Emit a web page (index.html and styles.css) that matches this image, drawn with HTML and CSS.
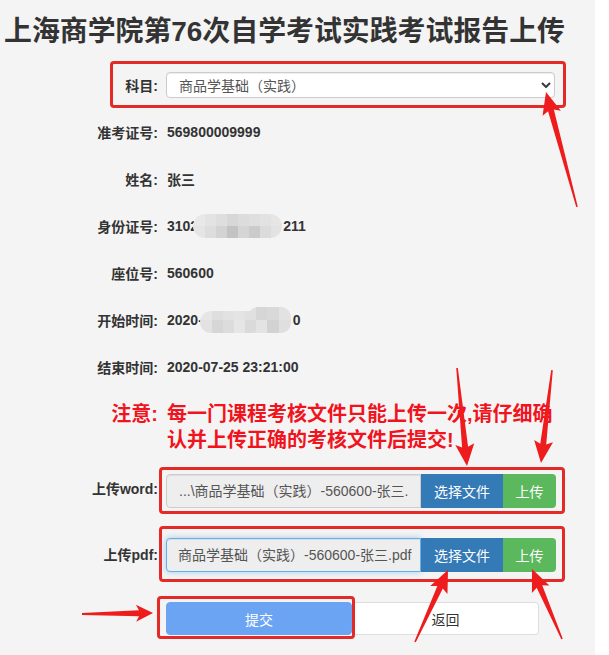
FILE: index.html
```html
<!DOCTYPE html>
<html lang="zh-CN">
<head>
<meta charset="utf-8">
<title>上海商学院第76次自学考试实践考试报告上传</title>
<link rel="stylesheet" href="styles.css">
</head>
<body>
<div class="page">
  <h1 class="title">上海商学院第76次自学考试实践考试报告上传</h1>

  <div class="mark subject">
    <span class="lbl">科目:</span>
    <div class="select">
      <span>商品学基础（实践）</span>
      <svg class="chev" width="10" height="6" viewBox="0 0 10 6"><path d="M1 1 L5 5 L9 1" fill="none" stroke="#3a3a3a" stroke-width="2"/></svg>
    </div>
  </div>

  <div class="info">
    <div class="row"><span class="lbl">准考证号:</span><span class="val">569800009999</span></div>
    <div class="row"><span class="lbl">姓名:</span><span class="val">张三</span></div>
    <div class="row"><span class="lbl">身份证号:</span><span class="val">3102<svg class="blur blur-id" width="89" height="24" viewBox="0 0 89 24"><defs><clipPath id="cb1"><rect width="89" height="24" rx="12"/></clipPath></defs><g clip-path="url(#cb1)"><rect x="0" y="0" width="12" height="12" fill="#e8e8e8"/><rect x="12" y="0" width="11" height="12" fill="#e3e3e3"/><rect x="23" y="0" width="11" height="12" fill="#dedede"/><rect x="34" y="0" width="11" height="12" fill="#d7d7d7"/><rect x="45" y="0" width="11" height="12" fill="#dcdcdc"/><rect x="56" y="0" width="11" height="12" fill="#dfdfdf"/><rect x="67" y="0" width="11" height="12" fill="#e2e2e2"/><rect x="78" y="0" width="11" height="12" fill="#e6e6e6"/><rect x="0" y="12" width="12" height="12" fill="#e5e5e5"/><rect x="12" y="12" width="11" height="12" fill="#dddddd"/><rect x="23" y="12" width="11" height="12" fill="#d3d3d3"/><rect x="34" y="12" width="11" height="12" fill="#c3c3c3"/><rect x="45" y="12" width="11" height="12" fill="#d5d5d5"/><rect x="56" y="12" width="11" height="12" fill="#cbcbcb"/><rect x="67" y="12" width="11" height="12" fill="#dbdbdb"/><rect x="78" y="12" width="11" height="12" fill="#e3e3e3"/></g></svg><span class="after-id">211</span></span></div>
    <div class="row"><span class="lbl">座位号:</span><span class="val">560600</span></div>
    <div class="row"><span class="lbl">开始时间:</span><span class="val">2020-<svg class="blur blur-time" width="91" height="26" viewBox="0 0 91 26"><defs><clipPath id="cb2"><rect x="0" y="4" width="62" height="22" rx="11"/><rect x="48" y="0" width="43" height="26" rx="10"/></clipPath></defs><g clip-path="url(#cb2)"><rect x="0" y="0" width="12" height="13" fill="#e6e6e6"/><rect x="12" y="0" width="11" height="13" fill="#dedede"/><rect x="23" y="0" width="11" height="13" fill="#e2e2e2"/><rect x="34" y="0" width="11" height="13" fill="#e4e4e4"/><rect x="45" y="0" width="11" height="13" fill="#e0e0e0"/><rect x="56" y="0" width="11" height="13" fill="#d6d6d6"/><rect x="67" y="0" width="12" height="13" fill="#d9d9d9"/><rect x="79" y="0" width="12" height="13" fill="#e2e2e2"/><rect x="0" y="13" width="12" height="13" fill="#e2e2e2"/><rect x="12" y="13" width="11" height="13" fill="#d6d6d6"/><rect x="23" y="13" width="11" height="13" fill="#dcdcdc"/><rect x="34" y="13" width="11" height="13" fill="#e6e6e6"/><rect x="45" y="13" width="11" height="13" fill="#dadada"/><rect x="56" y="13" width="11" height="13" fill="#e3e3e3"/><rect x="67" y="13" width="12" height="13" fill="#d2d2d2"/><rect x="79" y="13" width="12" height="13" fill="#dfdfdf"/></g></svg><span class="after-time">0</span></span></div>
    <div class="row"><span class="lbl">结束时间:</span><span class="val">2020-07-25 23:21:00</span></div>
  </div>

  <div class="notice">
    <span class="lbl">注意:</span>
    <span class="val">每一门课程考核文件只能上传一次,请仔细确<br>认并上传正确的考核文件后提交!</span>
  </div>

  <div class="upload upload-word">
    <span class="lbl">上传word:</span>
    <div class="mark ubox">
      <div class="igroup">
        <span class="ifield">...\商品学基础（实践）-560600-张三.</span>
        <span class="btn btn-blue">选择文件</span>
        <span class="btn btn-green">上传</span>
      </div>
    </div>
  </div>

  <div class="upload upload-pdf">
    <span class="lbl">上传pdf:</span>
    <div class="mark ubox">
      <div class="igroup">
        <span class="ifield focus">商品学基础（实践）-560600-张三.pdf</span>
        <span class="btn btn-blue">选择文件</span>
        <span class="btn btn-green">上传</span>
      </div>
    </div>
  </div>

  <div class="actions">
    <div class="mark sbox"><button class="submit">提交</button></div>
    <button class="back">返回</button>
  </div>

  <svg class="arrows" width="609" height="655" viewBox="0 0 609 655">
    <g transform="translate(546 92) rotate(-105.1)"><polygon points="-119,-0.8 -19,-3 -22,-9.5 0,0 -22,9.5 -19,3 -119,0.8"/></g>
    <g transform="translate(467 466) rotate(84.2)"><polygon points="-98.5,-0.8 -19,-3 -22,-9.5 0,0 -22,9.5 -19,3 -98.5,0.8"/></g>
    <g transform="translate(541 463) rotate(96.75)"><polygon points="-93.6,-0.8 -19,-3 -22,-9.5 0,0 -22,9.5 -19,3 -93.6,0.8"/></g>
    <g transform="translate(448 570) rotate(-65.4)"><polygon points="-79.2,-0.8 -19,-3 -22,-9.5 0,0 -22,9.5 -19,3 -79.2,0.8"/></g>
    <g transform="translate(532 569) rotate(-113.2)"><polygon points="-76.2,-0.8 -19,-3 -22,-9.5 0,0 -22,9.5 -19,3 -76.2,0.8"/></g>
    <g transform="translate(153 613) rotate(-0.8)"><polygon points="-71,-1 -14,-3 -17,-8.5 0,0 -17,8.5 -14,3 -71,1"/></g>
  </svg>
</div>
</body>
</html>
```

FILE: styles.css
```css
* {
  box-sizing: border-box;
}

html,
body {
  margin: 0;
  padding: 0;
  background: #ffffff;
}

body {
  font-family: "Liberation Sans", "Noto Sans CJK SC", sans-serif;
  font-size: 14px;
  color: #333333;
}

.page {
  position: relative;
  width: 595px;
  height: 655px;
  background: #f4f4f4;
  overflow: hidden;
}

.title {
  margin: 0;
  padding: 14px 0 0 4px;
  height: 61px;
  font-size: 27.9px;
  line-height: 36px;
  font-weight: bold;
  color: #333333;
  white-space: nowrap;
}

.mark {
  border: 3px solid #e42a26;
  border-radius: 4px;
}

.lbl {
  flex: none;
  width: 158px;
  text-align: right;
  font-weight: bold;
  white-space: nowrap;
}

.subject {
  display: flex;
  align-items: center;
  margin-left: 110px;
  width: 456px;
  height: 47px;
}

.subject .lbl {
  width: 45px;
}

.select {
  margin-left: 8px;
  width: 389px;
  height: 26px;
  display: flex;
  align-items: center;
  justify-content: space-between;
  padding: 0 3px 0 12px;
  background: #ffffff;
  border: 1px solid #cccccc;
  border-radius: 4px;
  color: #555555;
  box-shadow: inset 0 1px 1px rgba(0, 0, 0, 0.075);
}

.chev {
  display: block;
}

.row {
  display: flex;
  align-items: center;
  height: 47px;
}

.val {
  margin-left: 9px;
  font-weight: bold;
  display: flex;
  align-items: center;
  white-space: nowrap;
}

.blur {
  display: block;
  flex: none;
}

.blur-id {
  margin-left: -5px;
}

.after-id {
  margin-left: 1px;
}

.blur-time {
  margin-left: -3px;
}

.after-time {
  margin-left: 2px;
}

.notice {
  display: flex;
  margin-top: 11px;
  color: #f0141e;
  font-size: 20px;
  line-height: 26px;
  font-weight: bold;
}

.notice .val {
  display: block;
  white-space: nowrap;
}

.upload {
  display: flex;
  align-items: center;
}

.upload-word {
  margin-top: 14px;
}

.upload-word .lbl {
  padding-bottom: 6px;
}

.upload-pdf {
  margin-top: 12px;
}

.ubox {
  margin-left: 1px;
  padding: 4px 6px 3px 4px;
}

.upload-pdf .ubox {
  padding: 9px 6px 7px 4px;
}

.igroup {
  display: flex;
  width: 390px;
  height: 34px;
}

.ifield {
  width: 255px;
  height: 34px;
  padding: 0 8px 0 12px;
  background: #eeeeee;
  border: 1px solid #cccccc;
  border-radius: 4px 0 0 4px;
  color: #555555;
  line-height: 32px;
  white-space: nowrap;
  overflow: hidden;
  box-shadow: inset 0 1px 1px rgba(0, 0, 0, 0.075);
}

.ifield.focus {
  padding-left: 11px;
  border-color: #66afe9;
  box-shadow: inset 0 1px 1px rgba(0, 0, 0, 0.075), 0 0 6px rgba(102, 175, 233, 0.6);
}

.btn {
  display: flex;
  align-items: center;
  justify-content: center;
  height: 34px;
  color: #ffffff;
}

.btn-blue {
  width: 82px;
  background: #337ab7;
}

.btn-green {
  width: 53px;
  background: #5cb85c;
  border-radius: 0 4px 4px 0;
}

.actions {
  display: flex;
  align-items: flex-start;
  margin-top: 14px;
  margin-left: 157px;
}

.sbox {
  position: relative;
  z-index: 1;
  padding: 3px 0 1px 6px;
}

.submit,
.back {
  display: block;
  height: 33px;
  border-radius: 4px;
  font-family: inherit;
  font-size: 14px;
  padding: 0;
}

.submit {
  width: 186px;
  background: #6ba4f3;
  border: 1px solid #6ba4f3;
  color: #ffffff;
}

.back {
  width: 187px;
  margin-left: -3px;
  margin-top: 6px;
  background: #ffffff;
  border: 1px solid #dddddd;
  color: #333333;
}

.arrows {
  position: absolute;
  left: 0;
  top: 0;
  pointer-events: none;
  fill: #ee1c1c;
}
```
